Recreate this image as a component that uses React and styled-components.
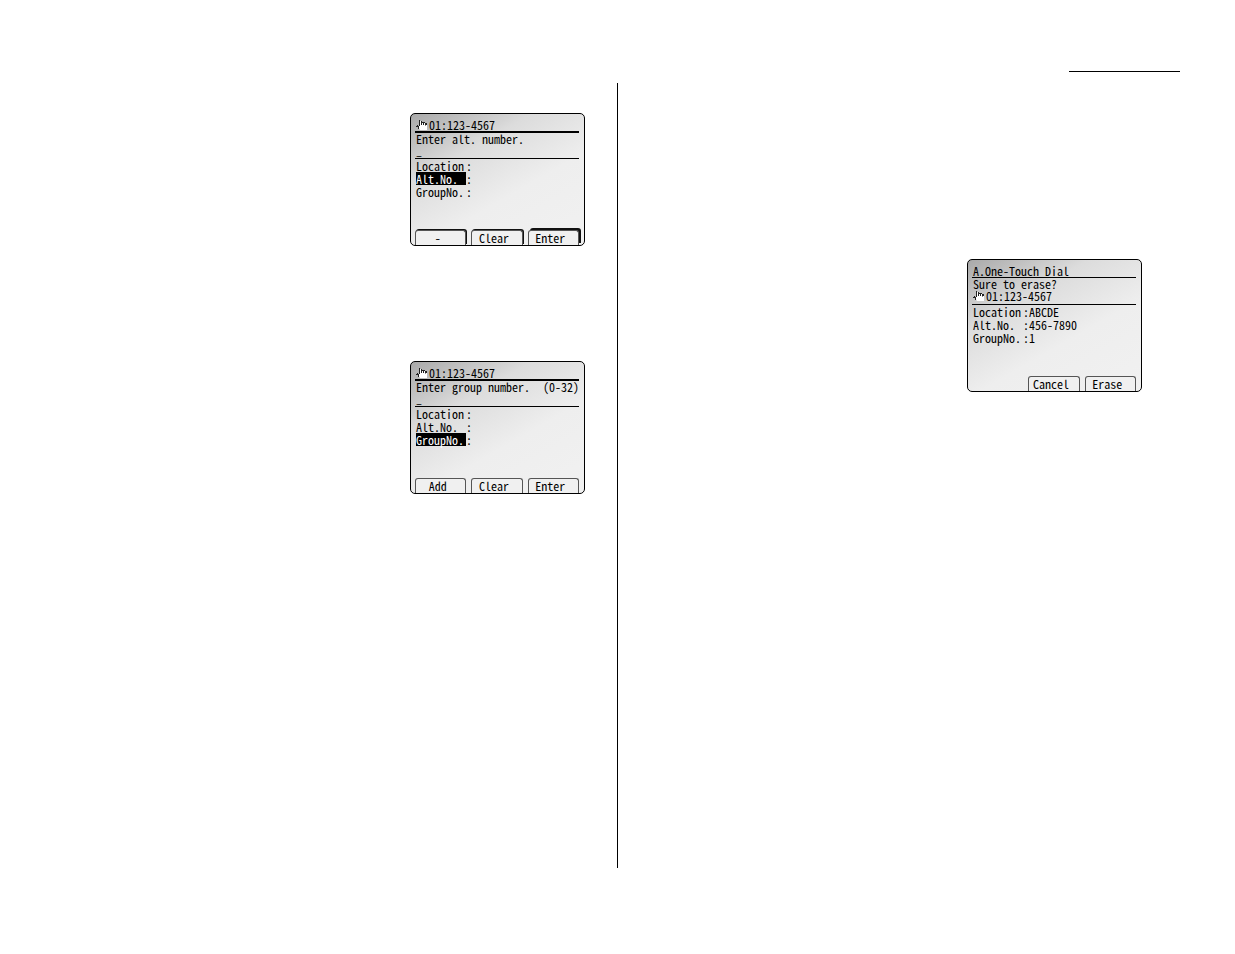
import React from 'react'
import styled, { createGlobalStyle } from 'styled-components'

const HandIcon = () => (
  <Hand viewBox='0 0 11 10' aria-hidden='true'>
    <path d='M3 1h2v2h6v7H4L2 7h1z' fill='#fff' />
    <path
      d='M3.500 0v6M5.500 1v4M6 2.500h1M7.500 2v3M8 2.500h1M9.500 3v2.500M10.500 3v2'
      stroke='#222'
      fill='none'
    />
    <path d='M1 5h1v1h1v2H2V7H0V6h1zM2 8h1v1H2z' fill='#222' />
  </Hand>
)

const Fields = ({ rows, active }) => (
  <FieldList>
    {rows.map(([name, value]) => (
      <Field key={name}>
        <Name $active={name === active}>{name}</Name>
        <dd>:{value}</dd>
      </Field>
    ))}
  </FieldList>
)

const EntryScreen = ({ id, prompt, range, active, keys }) => (
  <Screen>
    <Title $rule={2}>
      <HandIcon />
      01:123-4567
    </Title>
    <Prompt htmlFor={id}>
      <span>{prompt}</span>
      {range && <span>{range}</span>}
    </Prompt>
    <Entry id={id} defaultValue='_' />
    <Fields
      active={active}
      rows={[['Location'], ['Alt.No.'], ['GroupNo.']]}
    />
    <Keys>
      {keys.map(([label, depth]) => (
        <Key key={label} type='button' $depth={depth}>
          {label}
        </Key>
      ))}
    </Keys>
  </Screen>
)

const EraseScreen = () => (
  <Screen>
    <Title $rule={1}>A.One-Touch Dial</Title>
    <Message>
      <Line>Sure to erase?</Line>
      <Line>
        <HandIcon />
        01:123-4567
      </Line>
    </Message>
    <Fields
      rows={[
        ['Location', 'ABCDE'],
        ['Alt.No.', '456-7890'],
        ['GroupNo.', '1'],
      ]}
    />
    <Keys>
      <span />
      <Key type='button'>Cancel</Key>
      <Key type='button'>Erase</Key>
    </Keys>
  </Screen>
)

const App = () => {
  return (
    <Page>
      <GlobalStyle />
      <HeaderRule />
      <Columns>
        <LeftColumn>
          <EntryScreen
            id='alt-number'
            prompt='Enter alt. number.'
            active='Alt.No.'
            keys={[['-', 1], ['Clear', 1], ['Enter', 2]]}
          />
          <EntryScreen
            id='group-number'
            prompt='Enter group number.'
            range='(0-32)'
            active='GroupNo.'
            keys={[['Add'], ['Clear'], ['Enter']]}
          />
        </LeftColumn>
        <RightColumn>
          <EraseScreen />
        </RightColumn>
      </Columns>
    </Page>
  )
}

const GlobalStyle = createGlobalStyle`
  *, *::before, *::after {
    box-sizing: border-box;
  }

  body {
    margin: 0;
    background: #fff;
    color: #000;
  }

  dl, dd, h2, p {
    margin: 0;
  }
`

const Page = styled.main`
  display: flex;
  flex-direction: column;
  min-height: 100vh;
  padding: 71px 55px 86px 54px;
`

const HeaderRule = styled.div`
  align-self: flex-end;
  width: 111px;
  border-top: 1px solid #000;
`

const Columns = styled.div`
  flex: 1;
  display: grid;
  grid-template-columns: 1fr 1fr;
  margin-top: 11px;
`

const Column = styled.section`
  display: flex;
  flex-direction: column;
  align-items: flex-end;
`

const LeftColumn = styled(Column)`
  gap: 115px;
  padding: 30px 32px 0 0;
`

const RightColumn = styled(Column)`
  padding: 176px 38px 0 0;
  border-left: 1px solid #000;
`

const Screen = styled.article`
  display: flex;
  flex-direction: column;
  width: 175px;
  min-height: 133px;
  padding: 4px 5px 0 4px;
  border: 1px solid #000;
  border-radius: 5px;
  background: linear-gradient(150deg, #a9a9a9 0%, #dcdcdc 30%, #eee 60%, #f1f1f1 100%);
  font-family: 'Noto Sans CJK JP', 'Liberation Mono', monospace;
  font-feature-settings: 'hwid';
  font-size: 12px;
  font-weight: 400;
  line-height: 13px;
`

const Hand = styled.svg`
  width: 11px;
  height: 10px;
  margin-right: 2px;
`

const Title = styled.h2`
  display: flex;
  align-items: center;
  padding-left: 1px;
  border-bottom: ${(props) => props.$rule}px solid #000;
  font-size: inherit;
  font-weight: inherit;
`

const Prompt = styled.label`
  display: flex;
  justify-content: space-between;
  padding-left: 1px;
  line-height: 12px;
`

const Entry = styled.input`
  height: 14px;
  padding: 0 0 4px 1px;
  border: 0;
  border-bottom: 1px solid #000;
  border-radius: 0;
  outline: 0;
  background: transparent;
  color: inherit;
  font: inherit;
  font-feature-settings: inherit;
  line-height: 17px;
`

const Message = styled.div`
  padding-bottom: 2px;
  border-bottom: 1px solid #000;
`

const Line = styled.p`
  display: flex;
  align-items: center;
  padding-left: 1px;
  line-height: 12px;
`

const FieldList = styled.dl`
  padding-left: 1px;
`

const Field = styled.div`
  display: grid;
  grid-template-columns: 50px 1fr;
`

const Name = styled.dt`
  background: ${(props) => (props.$active ? '#000' : 'transparent')};
  color: ${(props) => (props.$active ? '#fff' : 'inherit')};
`

const Keys = styled.div`
  display: grid;
  grid-template-columns: repeat(3, 1fr);
  gap: 5px;
  margin-top: auto;
`

const Key = styled.button`
  height: 15px;
  padding: 0 6px 1px 0;
  border: 1px solid #555;
  border-bottom: 0;
  border-radius: 3px 3px 0 0;
  background: #f0f0f0;
  box-shadow: ${(props) =>
    props.$depth ? `${props.$depth}px -${props.$depth}px 0 #111` : 'none'};
  color: inherit;
  font: inherit;
  font-feature-settings: inherit;
  line-height: 12px;
`

export default App
